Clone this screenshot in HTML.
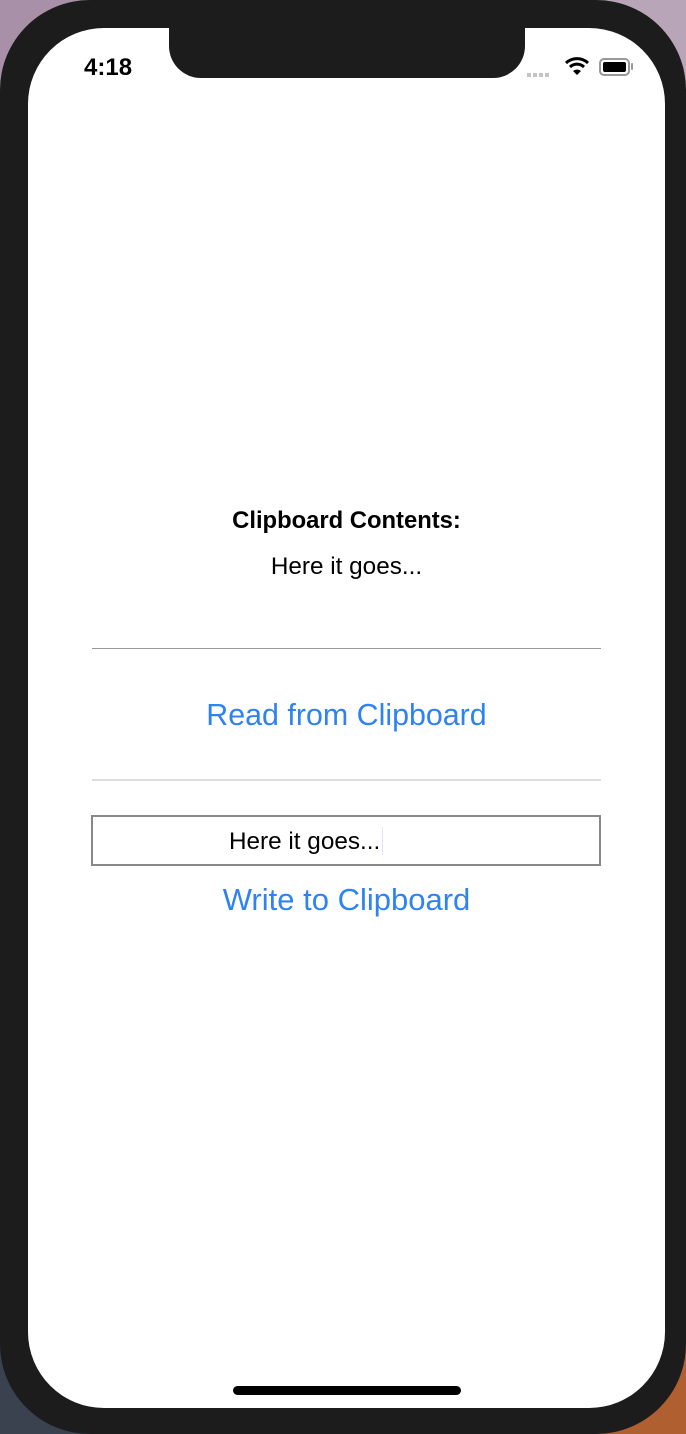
<!DOCTYPE html>
<html><head><meta charset="utf-8"><style>
html,body{margin:0;padding:0;width:686px;height:1434px;overflow:hidden;background:#1c1c1c;font-family:"Liberation Sans",Arial,sans-serif}
.bgtl{position:absolute;left:0;top:0;width:120px;height:120px;background:#a891a8}
.bgtr{position:absolute;right:0;top:0;width:120px;height:120px;background:#b9a5b8}
.bgbl{position:absolute;left:0;bottom:0;width:100px;height:100px;background:#3a4250}
.bgbr{position:absolute;right:0;bottom:0;width:100px;height:100px;background:#b06030}
.frame{position:absolute;left:0;top:0;width:686px;height:1434px;background:#1c1c1c;border-radius:90px}
.screen{position:absolute;left:28px;top:28px;width:637px;height:1380px;background:#fff;border-radius:76px;overflow:hidden}
.notch{position:absolute;left:141px;top:-2px;width:356px;height:52px;background:#1c1c1c;border-radius:0 0 32px 32px}
.time{position:absolute;left:56px;top:26px;font-size:24px;font-weight:bold;color:#000}
.c{position:absolute;left:0;width:637px;text-align:center}
.line{position:absolute;left:64px;width:509px}
.blue{color:#2f83f0}
.dot{position:absolute;top:45px;width:4px;height:4px;background:#c4c4c4}
</style></head><body>
<div class="bgtl"></div><div class="bgtr"></div><div class="bgbl"></div><div class="bgbr"></div>
<div class="frame"></div>
<div class="screen">
 <div class="notch"></div>
 <div class="time">4:18</div>
 <div class="dot" style="left:499px"></div><div class="dot" style="left:505px"></div><div class="dot" style="left:511px"></div><div class="dot" style="left:517px"></div>
 <svg style="position:absolute;left:536px;top:28px" width="26" height="20" viewBox="0 0 26 20">
  <path d="M2 7 A16 16 0 0 1 24 7" stroke="#000" stroke-width="3" fill="none"/>
  <path d="M6 11 A10 10 0 0 1 20 11" stroke="#000" stroke-width="3" fill="none"/>
  <path d="M9 15 L13 19 L17 15 A6 6 0 0 0 9 15Z" fill="#000"/>
 </svg>
 <div style="position:absolute;left:571px;top:30px;width:31px;height:18px;border:2px solid #999;border-radius:5px;box-sizing:border-box;padding:2px"><div style="width:100%;height:100%;background:#000;border-radius:2px"></div></div>
 <div style="position:absolute;left:603px;top:35px;width:2px;height:7px;background:#999;border-radius:1px"></div>

 <div class="c" style="top:479px;font-size:23.8px;font-weight:bold;color:#000">Clipboard Contents:</div>
 <div class="c" style="top:525px;font-size:24.3px;color:#000">Here it goes...</div>
 <div class="line" style="top:620px;height:1px;background:#999"></div>
 <div class="c blue" style="top:670px;font-size:30.4px">Read from Clipboard</div>
 <div class="line" style="top:751px;height:2px;background:#ddd"></div>
 <div style="position:absolute;left:63px;top:787px;width:510px;height:51px;border:2px solid #888;box-sizing:border-box"></div>
 <div style="position:absolute;left:201px;top:799px;font-size:24.3px;color:#000">Here it goes...<span style="display:inline-block;width:1px;height:28px;background:#e0e8f8;vertical-align:-6px;margin-left:2px"></span></div>
 <div class="c blue" style="top:854px;font-size:31px">Write to Clipboard</div>
 <div style="position:absolute;left:205px;top:1358px;width:228px;height:9px;background:#000;border-radius:5px"></div>
</div>
</body></html>
